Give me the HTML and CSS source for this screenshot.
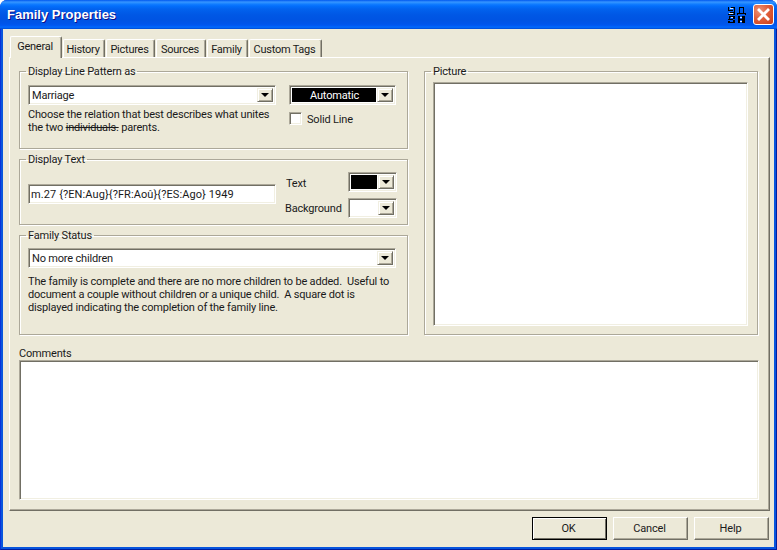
FILE: index.html
```html
<!DOCTYPE html>
<html lang="en">
<head>
<meta charset="utf-8">
<title>Family Properties</title>
<link rel="stylesheet" href="styles.css">
</head>
<body>
<div class="window">
  <header class="titlebar">
    <span class="title">Family Properties</span>
    <svg class="sysicon" width="18" height="16" viewBox="0 0 18 16" aria-hidden="true">
      <path d="M0 0h1v4H0zM1 3h4v1H1zM3 0h4v1H3zM6 1h1v6H6zM2 5h4v1H2zM0 7h7v1H0zM11 0h5v1h-5zM11 1h1v5h-1zM15 1h1v5h-1zM9 6h9v1H9zM9 7h1v1H9zM17 7h1v1h-1zM1 9h6v1H1zM5 10h2v2H5zM0 12h5v1H0zM5 13h2v2H5zM0 15h7v1H0zM1 10h1v2H1zM0 14h2v1H0zM10 9h2v7h-2zM14 9h3v7h-3zM12 12h2v1h-2z" fill="#000"/>
      <path d="M2 1h3v1H2zM1 6h4v1H1zM3 10h2v1H3zM12 10h2v1h-2zM12 14h2v1h-2z" fill="#fff" fill-opacity=".85"/>
    </svg>
    <button class="close" type="button" aria-label="Close">
      <svg width="15" height="15" viewBox="0 0 15 15"><path d="M3 3l9 9M12 3l-9 9" stroke="#fff" stroke-width="2.8" stroke-linecap="square" fill="none"/></svg>
    </button>
  </header>
  <div class="client">
    <nav class="tabs">
      <span class="tab active">General</span>
      <span class="tab t-history">History</span>
      <span class="tab t-pictures">Pictures</span>
      <span class="tab t-sources">Sources</span>
      <span class="tab t-family">Family</span>
      <span class="tab t-custom">Custom Tags</span>
    </nav>
    <main class="panel">
      <div class="columns">
        <div class="left">
          <fieldset class="group g-line">
            <legend>Display Line Pattern as</legend>
            <div class="g-line-grid">
              <div class="g-line-main">
                <div class="field combo c-main"><span class="value">Marriage</span><span class="drop"><i></i></span></div>
                <p class="help">Choose the relation that best describes what unites<br>the two <s>individuals.</s> parents.</p>
              </div>
              <div>
                <div class="field combo c-auto"><span class="value selected">Automatic</span><span class="drop"><i></i></span></div>
                <label class="check"><span class="box"></span>Solid Line</label>
              </div>
            </div>
          </fieldset>
          <fieldset class="group g-text">
            <legend>Display Text</legend>
            <div class="g-text-grid">
              <div class="field c-main input">m.27 {?EN:Aug}{?FR:Aoû}{?ES:Ago} 1949</div>
              <div class="colors">
                <span class="clabel l-text">Text</span>
                <div class="field combo c-color"><span class="swatch black"></span><span class="drop"><i></i></span></div>
                <span class="clabel l-bg">Background</span>
                <div class="field combo c-color"><span class="swatch"></span><span class="drop"><i></i></span></div>
              </div>
            </div>
          </fieldset>
          <fieldset class="group g-status">
            <legend>Family Status</legend>
            <div class="field combo c-wide"><span class="value">No more children</span><span class="drop"><i></i></span></div>
            <p class="help">The family is complete and there are no more children to be added.&nbsp; Useful to<br>document a couple without children or a unique child.&nbsp; A square dot is<br>displayed indicating the completion of the family line.</p>
          </fieldset>
        </div>
        <fieldset class="group g-picture">
          <legend>Picture</legend>
          <div class="field picture"></div>
        </fieldset>
      </div>
      <div class="comments-label">Comments</div>
      <div class="field comments"></div>
    </main>
    <footer class="actions">
      <button class="btn default" type="button">OK</button>
      <button class="btn" type="button">Cancel</button>
      <button class="btn" type="button">Help</button>
    </footer>
  </div>
</div>
</body>
</html>
```
FILE: styles.css
```css
* { box-sizing: border-box; }
html, body { margin: 0; padding: 0; }
body {
  width: 777px;
  height: 550px;
  overflow: hidden;
  background: #fff;
  font: 11px/13px Roboto, "Liberation Sans", Arial, sans-serif;
  letter-spacing: -0.18px;
  color: #1a1a1a;
}
.window {
  width: 777px;
  height: 550px;
  display: flex;
  flex-direction: column;
  border-radius: 7px 7px 0 0;
  background: #0855dd;
  border-left: 1px solid #0831d9;
  border-right: 1px solid #001ea0;
  border-bottom: 1px solid #001ea0;
}
.titlebar {
  height: 29px;
  margin: 0 -1px;
  flex: none;
  display: flex;
  align-items: center;
  padding: 0 3px 0 7px;
  border-radius: 7px 7px 0 0;
  background: linear-gradient(180deg, #0058ee 0, #3593ff 2px, #288eff 3px, #127dff 4px, #036ffc 6px, #0262ee 9px, #0057e5 15px, #0054e3 20px, #0055eb 24px, #005bf5 26px, #026afe 27px, #0062ef 28px, #0043cf 29px);
}
.title {
  flex: 1;
  font: bold 13px "Liberation Sans", Arial, sans-serif;
  letter-spacing: 0;
  color: #fff;
  text-shadow: 1px 1px #0f1089;
}
.sysicon { margin-right: 7px; }
.close {
  width: 21px;
  height: 21px;
  padding: 0;
  display: flex;
  align-items: center;
  justify-content: center;
  border: 1px solid #fff;
  border-radius: 3px;
  background: radial-gradient(circle at 30% 30%, #ec9478 0, #e05f3c 45%, #c83d18 100%);
}
.client {
  flex: 1;
  margin: 0 2px 2px;
  background: #ece9d8;
  padding: 7px 0 0 6px;
  display: flex;
  flex-direction: column;
}
.tabs {
  display: flex;
  align-items: flex-end;
  height: 21px;
  padding-left: 1px;
  position: relative;
  z-index: 1;
  gap: 1px;
}
.tab {
  height: 18px;
  padding: 3px 2px 0 0;
  letter-spacing: -0.25px;
  text-align: center;
  background: #ece9d8;
  border-top: 1px solid #fff;
  border-left: 1px solid #fff;
  border-right: 1px solid #716f64;
  box-shadow: inset -1px 0 #aca899;
  border-radius: 2px 2px 0 0;
}
.tab.active { width: 52px; height: 22px; margin-bottom: -1px; }
.t-history { width: 42px; }
.t-pictures { width: 49px; }
.t-sources { width: 50px; }
.t-family { width: 41px; }
.t-custom { width: 73px; }
.panel {
  width: 761px;
  height: 454px;
  padding: 7px 0 0 9px;
  border: 1px solid;
  border-color: #fff #716f64 #716f64 #fff;
  box-shadow: inset -1px -1px #aca899;
}
.columns { display: flex; gap: 16px; }
.left { display: flex; flex-direction: column; gap: 4px; width: 389px; }
.group {
  margin: 0;
  min-width: 0;
  padding: 7px 0 0 8px;
  border: 1px solid #aca899;
  box-shadow: inset 1px 1px #fff, 1px 1px #fff;
}
.group legend {
  padding: 0 2px;
  margin-left: -2px;
  line-height: 13px;
}
.g-line { height: 84px; }
.g-text { height: 72px; padding-top: 6px; }
.g-status { height: 106px; padding-top: 6px; }
.g-picture { width: 334px; height: 270px; padding-top: 4px; }
.g-line-grid { display: flex; gap: 13px; }
.g-line-main { width: 248px; flex: none; }
.g-text-grid { display: flex; gap: 10px; }
.field {
  background: #fff;
  border: 1px solid;
  border-color: #aca899 #fff #fff #aca899;
  box-shadow: inset 1px 1px #716f64, inset -1px -1px #f1efe2;
}
.combo { display: flex; height: 20px; padding: 2px; }
.c-main { width: 248px; height: 20px; flex: none; }
.c-auto { width: 107px; }
.c-wide { width: 368px; }
.c-color { width: 49px; }
.value { flex: 1; padding-left: 1px; line-height: 16px; }
.selected { background: #000; color: #fff; text-align: center; margin-right: 1px; }
.drop {
  width: 16px;
  flex: none;
  display: flex;
  align-items: center;
  justify-content: center;
  background: #ece9d8;
  border: 1px solid;
  border-color: #f1efe2 #716f64 #716f64 #f1efe2;
  box-shadow: inset 1px 1px #fff, inset -1px -1px #aca899;
}
.drop i {
  width: 0;
  height: 0;
  border: 4px solid transparent;
  border-top-color: #000;
  border-bottom-width: 0;
}
.help { margin: 3px 0 0; }
.g-status .help { margin-top: 7px; }
.check { display: flex; align-items: flex-start; gap: 5px; margin-top: 7px; line-height: 15px; height: 15px; }
.box {
  width: 13px;
  height: 13px;
  background: #fff;
  border: 1px solid;
  border-color: #aca899 #fff #fff #aca899;
  box-shadow: inset 1px 1px #716f64, inset -1px -1px #f1efe2;
}
.input { margin-top: 12px; padding: 3px 0 0 2px; letter-spacing: 0.1px; }
.colors {
  display: grid;
  grid-template-columns: 62px 49px;
  grid-template-rows: 20px 20px;
  gap: 6px 0;
  align-items: center;
}
.clabel { padding-top: 1px; }
.l-text { padding-top: 3px; }
.l-bg { margin-left: -1px; }
.swatch { flex: 1; background: #fff; margin-right: 1px; }
.swatch.black { background: #000; }
.picture { width: 315px; height: 244px; }
.comments-label { margin-top: 12px; height: 13px; }
.comments { width: 740px; height: 140px; }
.actions {
  display: flex;
  justify-content: flex-end;
  gap: 6px;
  padding: 6px 5px 0 0;
}
.btn {
  width: 75px;
  height: 23px;
  padding: 0 2px 0 0;
  font: inherit;
  letter-spacing: inherit;
  color: inherit;
  background: #ece9d8;
  border: 1px solid;
  border-color: #fff #716f64 #716f64 #fff;
  box-shadow: inset -1px -1px #aca899;
}
.btn.default {
  border: 1px solid #000;
  box-shadow: inset 1px 1px #fff, inset -1px -1px #716f64;
}
```
